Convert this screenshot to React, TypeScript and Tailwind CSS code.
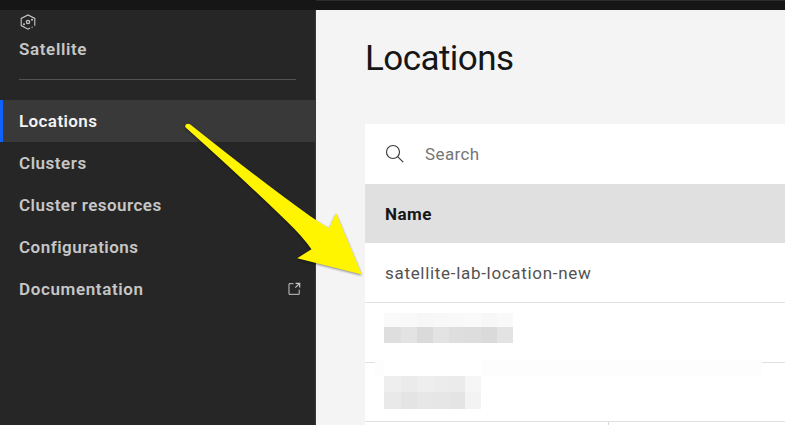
import React from 'react';

const navItems = [
  { label: 'Locations', spacing: 'tracking-[0.4px]', active: true, external: false },
  { label: 'Clusters', spacing: 'tracking-[0.52px]', active: false, external: false },
  { label: 'Cluster resources', spacing: 'tracking-[0.47px]', active: false, external: false },
  { label: 'Configurations', spacing: 'tracking-[0.48px]', active: false, external: false },
  { label: 'Documentation', spacing: 'tracking-[0.62px]', active: false, external: true },
];

function SatelliteIcon() {
  return (
    <svg className="ml-px block h-4 w-4" viewBox="0 0 16 16" fill="none" stroke="#c6c6c6" strokeWidth="1.1">
      <path d="M10 14.1 8 15.2 1.2 11.6V4.4L8 0.9l6.8 3.5v7.4M12.6 12.9l-1 .7" />
      <circle cx="8" cy="8" r="1.6" strokeWidth="1.3" />
      <circle cx="12" cy="5.7" r="1" fill="#c6c6c6" stroke="none" />
      <circle cx="4" cy="10.2" r="1" fill="#c6c6c6" stroke="none" />
    </svg>
  );
}

function LaunchIcon() {
  return (
    <svg className="block h-[14px] w-[14px]" viewBox="0 0 14 14" fill="none" stroke="#c6c6c6">
      <path d="M6.5 1.7H2v10.6h10.2V7.6" strokeWidth="1" />
      <path d="M8.6 1.3h4.1v4.1M12.5 1.5 8.3 5.7" strokeWidth="1.2" />
    </svg>
  );
}

function SearchIcon() {
  return (
    <svg className="block h-5 w-5" viewBox="0 0 20 20" fill="none" stroke="#3d3d3d" strokeWidth="1.2">
      <circle cx="8" cy="8" r="6.5" />
      <path d="m12.6 12.6 5.6 5.6" />
    </svg>
  );
}

function Sidebar() {
  return (
    <aside className="flex w-[316px] shrink-0 flex-col border-r border-[#393939] bg-[#262626] text-[17px] font-semibold text-[#c6c6c6]">
      <div className="ml-[19px] mr-[19px] flex h-[70px] flex-col border-b border-[#525252] pt-1">
        <SatelliteIcon />
        <div className="mt-2 leading-[22px] tracking-[0.63px]"><span>Satellite</span></div>
      </div>
      <nav className="mt-5">
        {navItems.map((item) => (
          <div
            key={item.label}
            className={`flex h-[42px] items-center justify-between border-l-[3px] pl-4 pr-[14px] leading-[22px] ${
              item.active ? 'border-[#0f62fe] bg-[#393939] text-[#f4f4f4]' : 'border-transparent'
            }`}
          >
            <span className={item.spacing}>{item.label}</span>
            {item.external && <LaunchIcon />}
          </div>
        ))}
      </nav>
    </aside>
  );
}

const upperTints = ['bg-[#fafafa]', 'bg-[#f9f9f9]', 'bg-[#f7f7f7]', 'bg-[#f8f8f8]', 'bg-[#f9f9f9]', 'bg-[#fafafa]', 'bg-[#f7f7f7]', 'bg-[#f9f9f9]'];
const nameTints = ['bg-[#dedede]', 'bg-[#e3e3e3]', 'bg-[#dadada]', 'bg-[#e3e3e3]', 'bg-[#dedede]', 'bg-[#dddddd]', 'bg-[#dadada]', 'bg-[#e3e3e3]'];
const lowTopTints = ['bg-[#eeeeee]', 'bg-[#ebebeb]', 'bg-[#eeeeee]', 'bg-[#ececec]', 'bg-[#ebebeb]', 'bg-[#f6f6f6]'];
const lowBottomTints = ['bg-[#e9e9e9]', 'bg-[#e4e4e4]', 'bg-[#e7e7e7]', 'bg-[#e6e6e6]', 'bg-[#e4e4e4]', 'bg-[#f3f3f3]'];

function Blocks({ tints, height }: { tints: string[]; height: string }) {
  return (
    <div className={`flex ${height}`}>
      {tints.map((tint, i) => (
        <div key={i} className={`${i === 0 ? 'w-[17px]' : 'w-4'} ${tint}`} />
      ))}
    </div>
  );
}

function LocationsTable() {
  return (
    <section className="ml-[49px] mt-[36px] flex-1 bg-white">
      <div className="flex h-[60px] items-center pl-5 text-[17px] text-[#757575]">
        <SearchIcon />
        <span className="ml-5 pt-0.5 tracking-[0.4px]">Search</span>
      </div>
      <div className="flex h-[59px] items-center bg-[#e0e0e0] pl-5 pt-0.5 text-[17px] font-bold text-[#161616]">
        <span className="tracking-[0.5px]">Name</span>
      </div>
      <div className="flex h-[60px] items-center border-b border-[#e0e0e0] pl-5 pt-0.5 text-[17px] text-[#525252]">
        <span className="tracking-[0.69px]">satellite-lab-location-new</span>
      </div>
      <div className="h-[57px] pl-[19px] pt-[10px]">
        <Blocks tints={upperTints} height="h-[14px]" />
        <Blocks tints={nameTints} height="h-4" />
      </div>
      <div className="flex h-4 items-start">
        <div className="mt-[2px] h-px w-[10px] bg-[#e0e0e0]" />
        <div className="h-4 w-[9px] bg-[#fdfdfd]" />
        <div className="w-[97px]" />
        <div className="h-4 w-[281px] bg-[#fdfdfd]" />
        <div className="mt-[2px] h-px flex-1 bg-[#e0e0e0]" />
      </div>
      <div className="h-[46px] border-b border-[#e0e0e0] pl-[19px]">
        <Blocks tints={lowTopTints} height="h-4" />
        <Blocks tints={lowBottomTints} height="h-[17px]" />
      </div>
      <div className="ml-[243px] h-[3px] w-px bg-[#d8d8d8]" />
    </section>
  );
}

function Arrow() {
  return (
    <svg className="pointer-events-none absolute left-0 top-0 h-[425px] w-[785px] drop-shadow-[0_1px_1px_rgba(0,0,0,0.45)]" viewBox="0 0 785 425">
      <path
        d="M185.4 127.2C184.5 124.6 187.2 122.6 190 124.2Q265 184 310 216Q320 223 329.2 228.2L336 213L361.8 274.4L297.2 258.2L311.5 249.2Q302 236 287.5 222Q240 176 185.4 127.2Z"
        fill="#fff500"
      />
    </svg>
  );
}

export default function App() {
  return (
    <div className="relative flex h-[425px] w-[785px] flex-col overflow-hidden bg-[#f4f4f4] font-['Roboto','Liberation_Sans',sans-serif]">
      <header className="flex h-[10px] shrink-0 bg-[#161616]">
        <div className="ml-[316px] h-px flex-1 bg-[#2b2b2b]" />
      </header>
      <div className="flex min-h-0 flex-1">
        <Sidebar />
        <main className="flex min-w-0 flex-1 flex-col">
          <h1 className="ml-[49px] mt-[26px] h-[52px] pt-px text-[35px] font-normal leading-[44px] tracking-[-0.55px] text-[#161616]">
            <span>Locations</span>
          </h1>
          <LocationsTable />
        </main>
      </div>
      <Arrow />
    </div>
  );
}
